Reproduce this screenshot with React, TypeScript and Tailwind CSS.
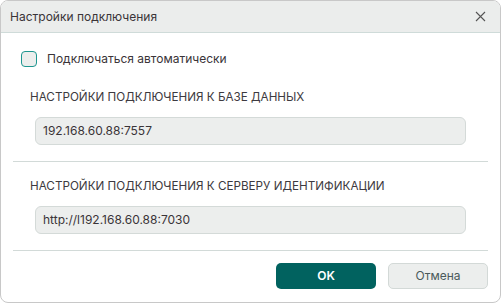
import React, { useState } from 'react';

const font = { fontFamily: 'Inter, "Noto Sans", sans-serif' };

function Section({ title, value }: { title: string; value: string }) {
    return (
        <div className="flex flex-col">
            <div className="pl-[17px] h-4 leading-4 text-[11.7px] text-[#3d3a40]">{title}</div>
            <div className="mx-[22px] mt-3 h-[28px] rounded-[6px] border border-[#d4dad8] bg-[#eceeed] px-[7px] flex items-center text-[12px] text-[#3a3438]">
                {value}
            </div>
        </div>
    );
}

export default function App() {
    const [auto, setAuto] = useState(false);

    return (
        <div className="w-[502px] h-[303px] bg-white" style={font}>
            <div className="w-[501px] h-[303px] border border-[#c8c8c8] rounded-[8px] overflow-hidden flex flex-col bg-white">
                <div className="h-[32px] shrink-0 bg-[#ebedec] border-b border-[#cfdbd9] flex items-center justify-between pl-[9px] pr-[12px]">
                    <span className="text-[12px] text-[#3a3438]">Настройки подключения</span>
                    <button className="w-4 h-4 flex items-center justify-center text-[#555]">
                        <svg width="11" height="11" viewBox="0 0 11 11" fill="none" stroke="currentColor" strokeWidth="1.1">
                            <path d="M1 1L10 10M10 1L1 10" />
                        </svg>
                    </button>
                </div>
                <div className="flex flex-col px-[12px]">
                    <label className="mt-[18px] pl-[8px] flex items-center gap-[10px] h-4 cursor-pointer">
                        <span
                            onClick={() => setAuto(!auto)}
                            className="w-4 h-4 rounded-[4px] border-[1.5px] border-[#1e9690] bg-[#eceeed]"
                        />
                        <span className="text-[12px] text-[#3a3438]">Подключаться автоматически</span>
                    </label>
                    <div className="mt-[22px]">
                        <Section title="НАСТРОЙКИ ПОДКЛЮЧЕНИЯ К БАЗЕ ДАННЫХ" value="192.168.60.88:7557" />
                    </div>
                    <div className="mt-4 h-px bg-[#d2dad8]" />
                    <div className="mt-4">
                        <Section title="НАСТРОЙКИ ПОДКЛЮЧЕНИЯ К СЕРВЕРУ ИДЕНТИФИКАЦИИ" value="http://l192.168.60.88:7030" />
                    </div>
                    <div className="mt-4 h-px bg-[#d2dad8]" />
                    <div className="mt-3 flex justify-end gap-3">
                        <button className="w-[100px] h-[26px] rounded-[5px] bg-[#01625f] text-white text-[12px] font-semibold">OK</button>
                        <button className="w-[100px] h-[26px] rounded-[5px] bg-[#eceeed] border border-[#d3d9d7] text-[#4a5a5b] text-[12px]">Отмена</button>
                    </div>
                </div>
            </div>
        </div>
    );
}
